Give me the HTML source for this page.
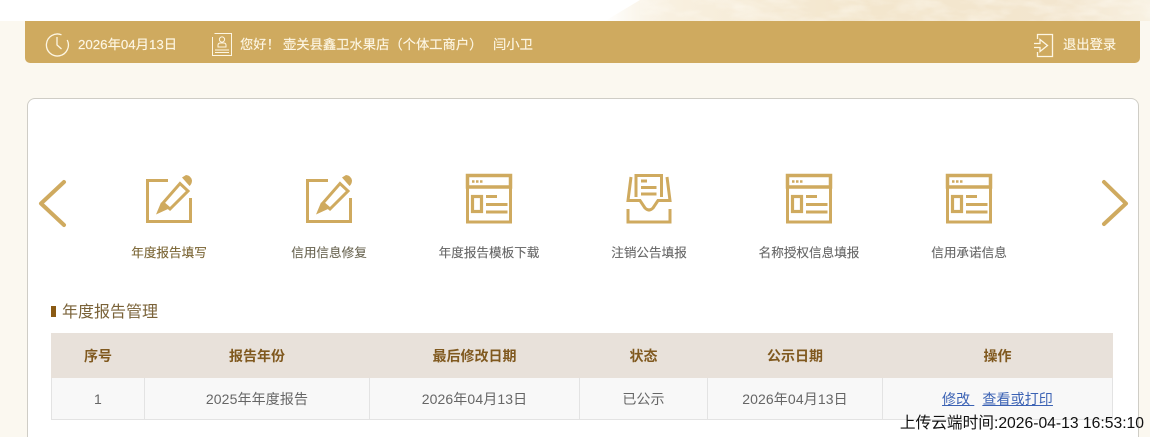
<!DOCTYPE html>
<html lang="zh">
<head>
<meta charset="utf-8">
<style>
html,body{margin:0;padding:0;width:1150px;height:437px;overflow:hidden;}
#page{position:relative;width:1150px;height:437px;overflow:hidden;background:#fbf8f0;font-family:"Liberation Sans","WenQuanYi Zen Hei","Noto Sans CJK SC",sans-serif;}
.abs{position:absolute;white-space:nowrap;}
#top{position:absolute;left:0;top:0;width:1150px;height:21px;background:#fff;overflow:hidden;}
#bar{position:absolute;left:25px;top:21px;width:1115px;height:42px;background:#cfaa5f;border-radius:0 0 5px 5px;}
#card{position:absolute;left:27px;top:98px;width:1110px;height:338px;background:#fff;border:1px solid #cfcdc6;border-bottom:none;border-radius:8px 8px 0 0;}
.bt{color:#fdf6e3;font-size:13.3px;line-height:18px;top:36px;-webkit-text-stroke:.15px #fdf6e3;}
.nav{color:#666;font-size:12.6px;line-height:16px;top:245px;text-align:center;width:160px;-webkit-text-stroke:.12px currentColor;}
table{position:absolute;left:51px;top:333px;width:1062px;border-collapse:collapse;table-layout:fixed;font-size:14px;}
th{height:44px;padding:1px 0 0;box-sizing:border-box;background:#e8e1da;color:#80591f;font-weight:bold;font-size:14px;border:1px solid #e8e1da;}
td{height:42px;padding:1px 0 0;box-sizing:border-box;background:#f8f8f8;color:#666;text-align:center;border:1px solid #e3e3e3;letter-spacing:.12px;}
a{color:#3b62b4;text-decoration:underline;}
</style>
</head>
<body>
<div id="page">
<div id="top">
<svg width="1150" height="21" viewBox="0 0 1150 21">
<defs>
<linearGradient id="g" x1="0" x2="1" y1="0" y2="0">
<stop offset="0" stop-color="#f5e9d2" stop-opacity="0"/>
<stop offset=".12" stop-color="#f8f0e0"/>
<stop offset=".45" stop-color="#f3e6cd"/>
<stop offset=".85" stop-color="#f3e6cf"/>
<stop offset="1" stop-color="#f8f1e2"/>
</linearGradient>
<filter id="n" x="0" y="0" width="100%" height="100%">
<feTurbulence type="fractalNoise" baseFrequency=".03 .08" numOctaves="3" seed="7"/>
<feColorMatrix values="0 0 0 0 1  0 0 0 0 .98  0 0 0 0 .93  2 0 0 0 -.8"/>
</filter>
</defs>
<polygon points="605,21 640,0 1150,0 1150,21" fill="url(#g)"/>
<rect x="640" y="0" width="510" height="21" filter="url(#n)" opacity=".55"/>
</svg>
</div>
<div id="bar"></div>

<svg class="abs" style="left:44px;top:31px" width="26" height="28" viewBox="0 0 26 28" fill="none" stroke="#fdf6e3" stroke-width="1.3">
<path d="M17.500 3.800A11 11 0 1 0 23.200 9"/><path d="M13 6V14L17.500 18"/>
</svg>
<div class="abs bt" style="left:78px">2026年04月13日</div>

<svg class="abs" style="left:211px;top:32px" width="22" height="26" viewBox="0 0 22 26" fill="none" stroke="#fdf6e3" stroke-width="1">
<path d="M3.500 1.500H20.500V23.500H1.500V5"/>
<circle cx="11" cy="7.500" r="2.600"/><path d="M7 15V13.200Q7 11 9.500 11H12.500Q15 11 15 13.200V15Z"/>
<path d="M4 18H18M4 20.500H18"/>
</svg>
<div class="abs bt" style="left:240px">您好！</div>
<div class="abs bt" style="left:283px">壶关县鑫卫水果店（个体工商户）</div>
<div class="abs bt" style="left:493px">闫小卫</div>

<svg class="abs" style="left:1033px;top:32px" width="22" height="26" viewBox="0 0 22 26" fill="none" stroke="#fdf6e3" stroke-width="1.3">
<path d="M4.500 7V2.500H19.500V24.500H4.500V20"/>
<path d="M1 11.500H7V7.500L14.500 13.500L7 19.500V15.500H1"/>
</svg>
<div class="abs bt" style="left:1063px">退出登录</div>

<div id="card"></div>

<svg class="abs" style="left:0;top:165px" width="1150" height="70" viewBox="0 165 1150 70" fill="none" stroke="#cfaa5f">
<path d="M64 182L41 203.500L64 225" stroke-width="4" stroke-linecap="round" stroke-linejoin="round"/>
<path d="M1104 182L1126 203.500L1104 224" stroke-width="4" stroke-linecap="round" stroke-linejoin="round"/>

<g>
<path d="M168 180.500H147.500V221.500H190.500V198" stroke-width="3"/>
<path d="M156 214.500L161 202.500L168 209Z" fill="#cfaa5f" stroke="none"/>
<path d="M163 203L180 183.500L188 191L170 209Z" stroke-width="3"/>
<path d="M182 177.500L186 175Q191 175.500 192 180.500Q192 184 189.500 186Z" fill="#cfaa5f" stroke="none"/>
</g>
<g transform="translate(160 0)">
<path d="M168 180.500H147.500V221.500H190.500V198" stroke-width="3"/>
<path d="M156 214.500L161 202.500L168 209Z" fill="#cfaa5f" stroke="none"/>
<path d="M163 203L180 183.500L188 191L170 209Z" stroke-width="3"/>
<path d="M182 177.500L186 175Q191 175.500 192 180.500Q192 184 189.500 186Z" fill="#cfaa5f" stroke="none"/>
</g>

<g>
<path d="M467.500 175.500H510.500V187H467.500Z" stroke-width="3.500"/>
<path d="M467.500 188V222H510.500V188" stroke-width="3"/>
<rect x="472.500" y="196.500" width="9" height="15" stroke-width="3.200"/>
<path d="M486 196.500H497M486 204.500H507.500M486 212H507.500" stroke-width="3"/>
<path d="M472 181.500H474.500M476 181.500H478.500M480 181.500H482.500" stroke-width="2.500"/>
</g>
<g transform="translate(320 0)">
<path d="M467.500 175.500H510.500V187H467.500Z" stroke-width="3.500"/>
<path d="M467.500 188V222H510.500V188" stroke-width="3"/>
<rect x="472.500" y="196.500" width="9" height="15" stroke-width="3.200"/>
<path d="M486 196.500H497M486 204.500H507.500M486 212H507.500" stroke-width="3"/>
<path d="M472 181.500H474.500M476 181.500H478.500M480 181.500H482.500" stroke-width="2.500"/>
</g>
<g transform="translate(480 0)">
<path d="M467.500 175.500H510.500V187H467.500Z" stroke-width="3.500"/>
<path d="M467.500 188V222H510.500V188" stroke-width="3"/>
<rect x="472.500" y="196.500" width="9" height="15" stroke-width="3.200"/>
<path d="M486 196.500H497M486 204.500H507.500M486 212H507.500" stroke-width="3"/>
<path d="M472 181.500H474.500M476 181.500H478.500M480 181.500H482.500" stroke-width="2.500"/>
</g>

<g stroke-width="3">
<path d="M636 197V175.500H661.500V197"/>
<path d="M631 177L628 200.500H640L645 208Q649 212 653 208L658 200.500H670L667 177"/>
<path d="M628 209V222H670V209"/>
<path d="M641 181H647M641 187.500H656.500M641 194H656.500"/>
</g>
</svg>

<div class="abs nav" style="left:89px;color:#7a6433">年度报告填写</div>
<div class="abs nav" style="left:249px;color:#6a6552">信用信息修复</div>
<div class="abs nav" style="left:409px">年度报告模板下载</div>
<div class="abs nav" style="left:569px">注销公告填报</div>
<div class="abs nav" style="left:729px">名称授权信息填报</div>
<div class="abs nav" style="left:889px">信用承诺信息</div>

<div class="abs" style="left:51px;top:306px;width:5px;height:11px;background:#8a5a14"></div>
<div class="abs" style="left:62px;top:303px;font-size:16px;line-height:20px;color:#7a6238">年度报告管理</div>

<table>
<colgroup><col style="width:93px"><col style="width:225px"><col style="width:210px"><col style="width:128px"><col style="width:175px"><col></colgroup>
<tr><th>序号</th><th>报告年份</th><th>最后修改日期</th><th>状态</th><th>公示日期</th><th>操作</th></tr>
<tr><td>1</td><td>2025年年度报告</td><td>2026年04月13日</td><td>已公示</td><td>2026年04月13日</td><td><a>修改&nbsp;</a>&nbsp;&nbsp;<a>查看或打印</a></td></tr>
</table>

<div class="abs" style="right:6px;top:415px;font-size:15.700px;line-height:18px;color:#111">上传云端时间:2026-04-13 16:53:10</div>
</div>
</body>
</html>
